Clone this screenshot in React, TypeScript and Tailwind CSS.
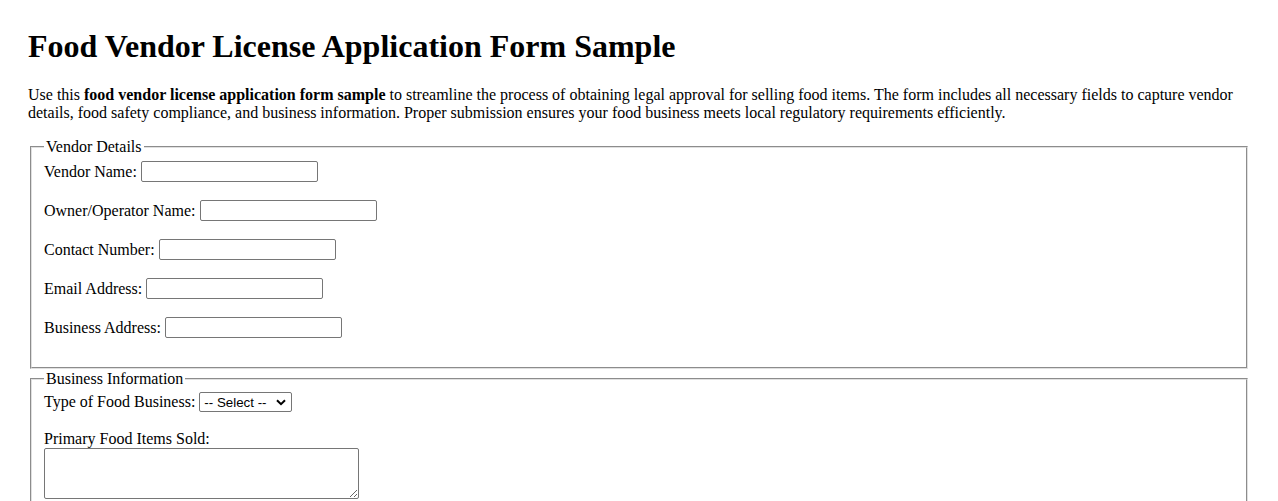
import React from 'react';

const inputCls =
  'w-[177px] h-[21px] border border-[#767676] rounded-[2px] px-0.5 bg-white text-[13.33px]';

const vendorFields = [
  'Vendor Name:',
  'Owner/Operator Name:',
  'Contact Number:',
  'Email Address:',
  'Business Address:',
];

function Field({ label }: { label: string }) {
  return (
    <div className="flex items-center gap-[4px] h-[21px] mb-[18px]">
      <label>{label}</label>
      <input type="text" className={inputCls} style={{ fontFamily: '"Liberation Sans", Arial, sans-serif' }} />
    </div>
  );
}

export default function App() {
  return (
    <div
      className="min-h-screen bg-white text-black text-[16px] px-[28px] pt-[28px]"
      style={{ fontFamily: '"Liberation Serif", "Times New Roman", serif' }}
    >
      <h1 className="text-[32px] font-bold leading-[37px] mb-[21px]">Food Vendor License Application Form Sample</h1>
      <p className="leading-[18px] mb-4">
        Use this <strong className="font-bold">food vendor license application form sample</strong> to streamline the
        process of obtaining legal approval for selling food items. The form includes all necessary fields to capture
        vendor details, food safety compliance, and business information. Proper submission ensures your food business
        meets local regulatory requirements efficiently.
      </p>

      <form>
        <fieldset className="mx-0.5 border-2 [border-style:groove] border-[#e0e0e0] px-3 pt-[5px] pb-[11px]">
          <legend className="px-0.5 leading-[18px]">Vendor Details</legend>
          {vendorFields.map((f) => (
            <Field key={f} label={f} />
          ))}
        </fieldset>

        <fieldset className="mx-0.5 mt-px border-2 [border-style:groove] border-[#e0e0e0] px-3 pt-[4px] pb-[10px]">
          <legend className="px-0.5 leading-[18px]">Business Information</legend>
          <div className="flex items-center gap-[4px] h-[20px] mb-[18px]">
            <label>Type of Food Business:</label>
            <span className="relative inline-block">
              <select
                className="block appearance-none w-[93px] h-[20px] border border-[#767676] rounded-[2px] bg-white pl-[4px] text-[13.33px] text-black"
                style={{ fontFamily: '"Liberation Sans", Arial, sans-serif' }}
                defaultValue=""
              >
                <option value="">-- Select --</option>
                <option>Food Truck</option>
                <option>Street Cart</option>
                <option>Market Stall</option>
                <option>Catering</option>
              </select>
              <svg
                className="pointer-events-none absolute right-[6px] top-[7px]"
                width="10"
                height="7"
                viewBox="0 0 10 7"
                fill="none"
              >
                <path d="M1 1.2 5 5.2 9 1.2" stroke="#000" strokeWidth="2" />
              </svg>
            </span>
          </div>
          <div className="leading-[18px]">
            <label>Primary Food Items Sold:</label>
          </div>
          <textarea
            className="block w-[315px] h-[51px] border border-[#767676] rounded-[2px] bg-white p-0.5 text-[13.33px]"
            style={{ fontFamily: '"Liberation Mono", monospace' }}
          />
        </fieldset>
      </form>
    </div>
  );
}
